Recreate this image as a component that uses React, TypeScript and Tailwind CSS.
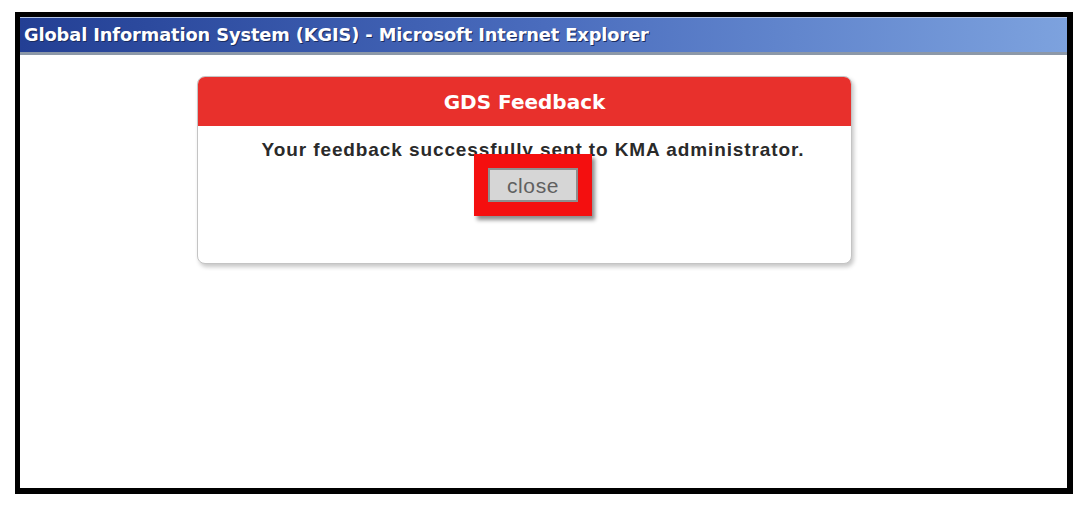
export default function App() {
  return (
    <div className="w-[1089px] h-[517px] bg-white pt-[12px] pl-[15px]">
      <div className="w-[1058px] h-[482px] border-black border-t-[5px] border-l-[5px] border-r-[6px] border-b-[6px] flex flex-col bg-white">
        <div className="h-[38px] flex items-center pl-[4px] bg-gradient-to-r from-[#233f94] via-[#4a6cbd] to-[#7da2de] border-t border-[#b4c4e4] border-b-[3px] border-b-[#8c98a8]">
          <span className="text-white font-bold text-[17.8px] tracking-[-0.1px] font-['DejaVu_Sans',sans-serif] [text-shadow:1px_1px_0_#1a2c60]">
            Global Information System (KGIS) - Microsoft Internet Explorer
          </span>
        </div>

        <div className="flex-1 pt-[21px] pl-[177px]">
          <div className="w-[655px] h-[188px] rounded-[8px] border border-[#c4c4c4] bg-white shadow-[2px_3px_4px_rgba(0,0,0,0.22)] flex flex-col overflow-hidden">
            <div className="h-[49px] bg-[#e8302c] flex items-center justify-center">
              <span className="text-white font-bold text-[20px] font-['DejaVu_Sans',sans-serif]">GDS Feedback</span>
            </div>
            <div className="flex flex-col items-center pt-[13px] pl-[17px]">
              <p className="text-[#2a2a2a] font-bold text-[19px] tracking-[0.9px] leading-[22px] font-['Liberation_Sans',Arial,sans-serif]">
                Your feedback successfully sent to KMA administrator.
              </p>
              <div className="-mt-[7px] border-[14px] border-[#f40f0f] shadow-[3px_4px_4px_rgba(0,0,0,0.45)]">
                <button className="w-[90px] h-[34px] bg-[#d6d6d6] border-2 border-[#8e8e8e] text-[#606060] text-[21px] tracking-[0.6px] leading-none font-['Liberation_Sans',Arial,sans-serif] flex items-center justify-center">
                  close
                </button>
              </div>
            </div>
          </div>
        </div>
      </div>
    </div>
  );
}
